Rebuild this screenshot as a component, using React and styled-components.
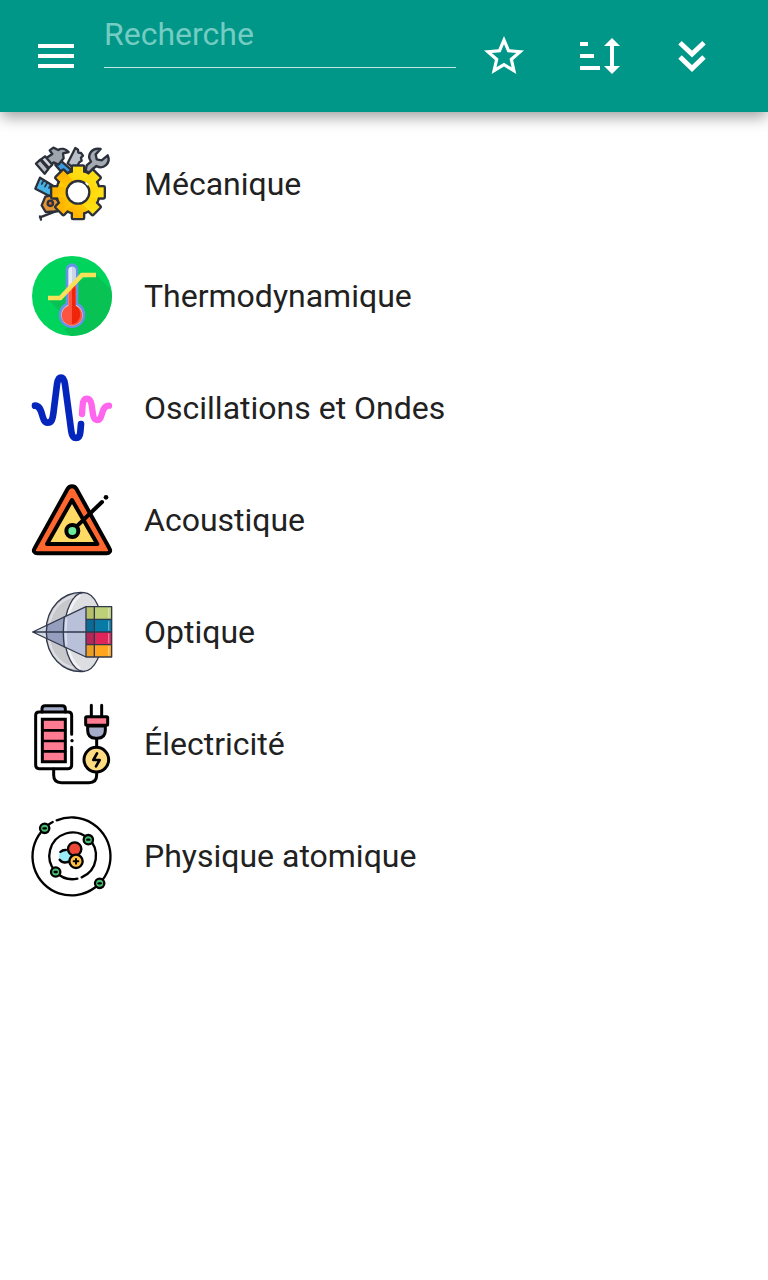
import React, { useState } from "react";
import styled, { ThemeProvider, createGlobalStyle } from "styled-components";

const theme = {
  primary: "#009688",
  onPrimary: "#ffffff",
  hint: "#74ccc2",
  underline: "#c4e6e2",
  text: "#212121",
  ink: "#2c303b",
};

const GlobalStyle = createGlobalStyle`
  body {
    margin: 0;
    background-color: white;
    font-family: Roboto, "Liberation Sans", sans-serif;
  }
`;

const St = {
  Header: styled.header`
    position: sticky;
    top: 0;
    display: flex;
    height: 112px;
    background-color: ${({ theme }) => theme.primary};
    box-shadow: 0 6px 14px -1px rgba(0, 0, 0, 0.38);
  `,

  IconButton: styled.button`
    display: flex;
    flex: none;
    align-items: center;
    justify-content: center;
    width: 96px;
    height: 100%;
    padding: 0;
    border: none;
    background-color: transparent;
    color: ${({ theme }) => theme.onPrimary};
    cursor: pointer;
  `,

  HeaderIcon: styled.svg`
    display: block;
    width: 48px;
    height: 48px;
    fill: currentColor;
  `,

  MenuArea: styled.div`
    display: flex;
    flex: none;
    width: 96px;
    padding-left: 8px;
  `,

  Search: styled.input`
    flex: 1;
    min-width: 0;
    height: 68px;
    box-sizing: border-box;
    padding: 0;
    border: none;
    border-bottom: 1px solid ${({ theme }) => theme.underline};
    border-radius: 0;
    outline: none;
    background-color: transparent;
    color: ${({ theme }) => theme.onPrimary};
    font-family: inherit;
    font-size: 32px;

    &::placeholder {
      color: ${({ theme }) => theme.hint};
      opacity: 1;
    }
  `,

  Actions: styled.div`
    display: flex;
    flex: none;
    padding-right: 24px;
  `,

  List: styled.ul`
    margin: 0;
    padding: 16px 0;
    list-style: none;
  `,

  Item: styled.a`
    display: flex;
    align-items: center;
    gap: 32px;
    height: 112px;
    padding: 0 32px;
    color: ${({ theme }) => theme.text};
    font-size: 32px;
    text-decoration: none;
  `,

  Picture: styled.svg`
    flex: none;
    width: 80px;
    height: 80px;
    overflow: visible;
    fill: none;
    stroke-linecap: round;
    stroke-linejoin: round;
  `,
};

// every category drawing uses the same 240 unit box
const Picture = ({ children }) => (
  <St.Picture viewBox="24 24 240 240" aria-hidden="true">
    {children}
  </St.Picture>
);

const GearShape = () => (
  <>
    <circle cx="162" cy="169" r="62" />
    {[0, 45, 90, 135].map((angle) => (
      <rect
        key={angle}
        x="147"
        y="92"
        width="30"
        height="154"
        transform={`rotate(${angle} 162 169)`}
      />
    ))}
  </>
);

const MechanicsIcon = () => (
  <Picture>
    <defs>
      <linearGradient
        id="gear"
        gradientUnits="userSpaceOnUse"
        x1="100"
        y1="230"
        x2="200"
        y2="110"
      >
        <stop offset="0.2" stopColor="#ffb400" />
        <stop offset="0.55" stopColor="#ffd400" />
        <stop offset="1" stopColor="#ffe21a" />
      </linearGradient>
    </defs>
    <g stroke={theme.ink} strokeWidth="7">
      {/* saw */}
      <path
        d="M131 82l23-46 8 5 1 9 8 1 6 8-6 6 2 9-8 6-9 22z"
        fill="#b9c0c8"
      />
      {/* wrench */}
      <path
        d="M185 104l3-16 13-11c-14-20 2-43 29-38l-15 16 3 15 15 3 18-15c11 24-13 44-34 32l-11 9-6 13z"
        fill="#a4aab2"
      />
      {/* hammer */}
      <path d="M94 87l16-13 31 27-8 14h-15z" fill="#3b9be0" />
      <path
        d="M61 70l24-16-8-11 11-8 15 7c9-7 22-3 31 6l-17 4 2 15-16 19-14-7-14 13z"
        fill="#9fa5ad"
      />
      <path d="M36 83l13-12 24 28-11 14z" fill="#b9bec5" />
      <path d="M51 70l12-9 22 25-10 10z" fill="#d4d8dc" />
      {/* ruler */}
      <path d="M48 125l44 27-10 31-48-25z" fill="#46b2e8" />
      <path d="M59 134l-6 10M70 140l-7 12M80 147l-5 9" strokeWidth="5" />
      {/* tape measure */}
      <path d="M64 182l22-5 26 29-12 20-35 2-12-20z" fill="#e39635" />
      <circle cx="79" cy="202" r="8" fill="#d86a20" />
      <path d="M95 226l-47 18M48 241l3 10" />
      <g strokeWidth="14">
        <GearShape />
      </g>
    </g>
    <g fill="url(#gear)">
      <GearShape />
    </g>
    <circle
      cx="162"
      cy="169"
      r="34"
      fill="white"
      stroke={theme.ink}
      strokeWidth="7"
    />
    <path d="M186 141l5 5" stroke="white" strokeWidth="5" />
  </Picture>
);

const ThermoIcon = () => (
  <Picture>
    <clipPath id="disc">
      <circle cx="144" cy="144" r="120" />
    </clipPath>
    <circle cx="144" cy="144" r="120" fill="#00d45d" />
    <path
      d="M216 80l64 64v140H160l-38-38 20-20-67-69h38l45-55z"
      fill="#08c253"
      clipPath="url(#disc)"
    />
    <path
      d="M144 46a19 19 0 0 1 19 19v100a40 40 0 1 1-38 0V65a19 19 0 0 1 19-19z"
      fill="#6693e7"
    />
    <path
      d="M144 56a11 11 0 0 1 11 11v104a32 32 0 1 1-22 0V67a11 11 0 0 1 11-11z"
      fill="#e7edf5"
    />
    <path d="M144 56a11 11 0 0 1 11 11v60h-11z" fill="#c9d6e6" />
    <path d="M133 119h22v54a31 31 0 1 1-22 0z" fill="#ff5440" />
    <path d="M144 110h11v63a31 31 0 0 1-11 56z" fill="#ee2508" />
    <path
      d="M72 150h37l65-69h42"
      stroke="#f8e158"
      strokeWidth="14"
      strokeLinecap="butt"
      strokeLinejoin="miter"
    />
  </Picture>
);

const WavesIcon = () => (
  <Picture>
    <path
      d="M33 137c26 0 17 51 38 51 13 0 15-12 17-27l11-88c2-13 5-20 12-20s10 7 12 20l19 142c2 14 6 19 14 19s12-6 13-18l2-24"
      stroke="#0526bd"
      strokeWidth="20"
    />
    <path
      d="M174 162l2-27c1-12 5-19 13-19 9 0 12 8 14 20l4 27c2 13 5 17 12 17 21 0 9-43 36-43"
      stroke="#ff65ed"
      strokeWidth="19"
    />
  </Picture>
);

const AcousticsIcon = () => (
  <Picture>
    <g stroke="black" strokeWidth="12">
      <path
        d="M131 50c6-10 20-10 26 0l99 179c6 9 0 15-9 15H41c-9 0-15-6-9-15z"
        fill="#ff672f"
      />
      <path d="M144 84l76 132H69z" fill="#ffda64" />
      <path d="M158 163L234 90" />
      <circle cx="145" cy="177" r="18" fill="#6ce99a" />
    </g>
    <circle cx="246" cy="76" r="7" fill="black" />
  </Picture>
);

const OpticsIcon = () => (
  <Picture>
    <g stroke="#32394c" strokeWidth="4">
      <path
        d="M181 26C117 20 66 72 66 144s51 124 115 118z"
        fill="#c6c8cc"
      />
      <ellipse cx="179" cy="144" rx="58" ry="118" fill="#dddee1" />
    </g>
    <path
      d="M146 37C100 50 75 91 74 144s25 94 72 107"
      stroke="#dddde2"
      strokeWidth="7"
    />
    <path
      d="M166 36c-24 18-39 63-39 108s15 90 39 108"
      stroke="#f2f2f4"
      strokeWidth="8"
    />
    <path d="M26 144L186 68v151z" fill="#b9c0d9" />
    <path d="M26 144l95-45c-4 29-4 60 0 90z" fill="#959fbd" />
    <path d="M26 144l43-20c-3 14-3 27 0 40z" fill="#d3d8e5" />
    <path d="M127 106c-3 26-3 50 0 76" stroke="#d7dcea" strokeWidth="7" />
    <rect x="186" y="68" width="76" height="38" fill="#bdd078" />
    <rect x="186" y="106" width="76" height="38" fill="#087aa6" />
    <rect x="186" y="144" width="76" height="38" fill="#df2459" />
    <rect x="186" y="182" width="76" height="37" fill="#ffa51f" />
    <path
      d="M186 68h26v38h-26zM186 182h26v37h-26z"
      fill="#9a842f"
      opacity="0.2"
    />
    <path d="M186 106h26v76h-26z" fill="#123458" opacity="0.2" />
    <path
      d="M254 74v26M254 112v26M254 150v26M254 188v25"
      stroke="white"
      strokeWidth="4"
      opacity="0.4"
    />
    <g stroke="#32394c" strokeWidth="4">
      <path d="M26 144L186 68h77v151h-77zM26 144h237M186 68v151M186 106h77M186 182h77M211 68v151" />
      <path d="M121 99c-4 29-4 60 0 90M69 124c-3 14-3 27 0 40" />
    </g>
  </Picture>
);

const ElectricityIcon = () => (
  <Picture>
    <g stroke="black" strokeWidth="9">
      <path d="M54 48V38q0-9 9-9h52q9 0 9 9v10" fill="#a4acca" />
      <path d="M143 115V58q0-10-10-10H45q-10 0-10 10v150q0 10 10 10h88q10 0 10-10v-54" />
      <path d="M55 70h69v127H55z" fill="#ff7b91" strokeLinejoin="miter" />
      <path d="M56 103h67M56 135h67M56 166h67" strokeWidth="8" />
      <path d="M89 219v18q0 23 23 23h83q23 0 23-23v-6M218 127v22" />
      <path d="M202 28v32M233 28v32" />
      <path d="M191 90h53v13q0 24-24 24h-5q-24 0-24-24z" fill="#a4acca" />
      <rect x="185" y="62" width="66" height="26" rx="3" fill="#ff7b91" />
      <circle cx="217" cy="191" r="37" fill="#ffdb82" />
      <path d="M219 172l-11 20h19l-11 19" strokeWidth="8" />
    </g>
    <circle cx="144" cy="134" r="5" fill="black" />
  </Picture>
);

const electrons = [
  [62, 61],
  [193, 95],
  [95, 192],
  [227, 226],
];

const AtomIcon = () => (
  <Picture>
    <g stroke="black" strokeWidth="7">
      <path d="M98 37A117 117 0 1 1 52 71M66 56q10-9 20-14" />
      <path d="M173 208A70 70 0 1 0 160 212" />
      <circle cx="124" cy="145" r="19" fill="#9cecf7" stroke="none" />
      <path d="M109 132q7-7 17-6M107 155q10 13 27 6" />
      <circle cx="152" cy="123" r="20" fill="#ee4737" />
      <circle cx="156" cy="160" r="20" fill="#ffc146" />
      <path d="M156 153v14M149 160h14" strokeWidth="6" />
      {electrons.map(([x, y]) => (
        <g key={x}>
          <circle cx={x} cy={y} r="14" fill="#48bd70" />
          <path d={`M${x - 3} ${y}h6`} />
        </g>
      ))}
    </g>
  </Picture>
);

const categories = [
  { id: "mecanique", label: "Mécanique", Icon: MechanicsIcon },
  { id: "thermodynamique", label: "Thermodynamique", Icon: ThermoIcon },
  { id: "oscillations", label: "Oscillations et Ondes", Icon: WavesIcon },
  { id: "acoustique", label: "Acoustique", Icon: AcousticsIcon },
  { id: "optique", label: "Optique", Icon: OpticsIcon },
  { id: "electricite", label: "Électricité", Icon: ElectricityIcon },
  { id: "atomique", label: "Physique atomique", Icon: AtomIcon },
];

const App = () => {
  const [query, setQuery] = useState("");

  const visible = categories.filter(({ label }) =>
    label.toLowerCase().includes(query.toLowerCase())
  );

  return (
    <ThemeProvider theme={theme}>
      <GlobalStyle />
      <St.Header>
        <St.MenuArea>
          <St.IconButton type="button" aria-label="Menu">
            <St.HeaderIcon viewBox="0 0 24 24">
              <path d="M3 18h18v-2H3v2zm0-5h18v-2H3v2zm0-7v2h18V6H3z" />
            </St.HeaderIcon>
          </St.IconButton>
        </St.MenuArea>
        <St.Search
          type="text"
          aria-label="Recherche"
          placeholder="Recherche"
          value={query}
          onChange={(e) => setQuery(e.target.value)}
        />
        <St.Actions>
          <St.IconButton type="button" aria-label="Favoris">
            <St.HeaderIcon viewBox="0 0 24 24">
              <path d="M22 9.24l-7.19-.62L12 2 9.19 8.63 2 9.24l5.46 4.73L5.82 21 12 17.27 18.18 21l-1.63-7.03L22 9.24zM12 15.4l-3.76 2.27 1-4.28-3.32-2.88 4.38-.38L12 6.1l1.71 4.04 4.38.38-3.32 2.88 1 4.28L12 15.4z" />
            </St.HeaderIcon>
          </St.IconButton>
          <St.IconButton type="button" aria-label="Trier">
            <St.HeaderIcon viewBox="0 0 48 48">
              <path d="M4 10h8v4H4zM4 22h14v4H4zM4 34h20v4H4zM36 6l8 8h-6v20h6l-8 8-8-8h6V14h-6z" />
            </St.HeaderIcon>
          </St.IconButton>
          <St.IconButton type="button" aria-label="Tout développer">
            <St.HeaderIcon viewBox="0 0 48 48">
              <path
                d="M8 10.7l12 11.3 12-11.3M8 25l12 11.6L32 25"
                fill="none"
                stroke="currentColor"
                strokeWidth="5"
              />
            </St.HeaderIcon>
          </St.IconButton>
        </St.Actions>
      </St.Header>
      <main>
        <St.List>
          {visible.map(({ id, label, Icon }) => (
            <li key={id}>
              <St.Item href={`#${id}`}>
                <Icon />
                {label}
              </St.Item>
            </li>
          ))}
        </St.List>
      </main>
    </ThemeProvider>
  );
};

export default App;
